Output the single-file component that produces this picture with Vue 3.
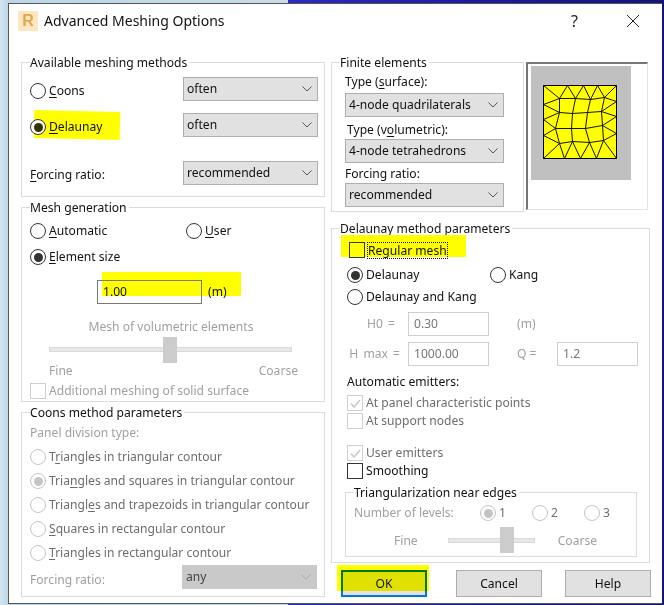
<script setup>
const coonsOptions = [
  { parts: ['T', 'r', 'iangles in triangular contour'] },
  { parts: ['Tria', 'n', 'gles and squares in triangular contour'], on: true },
  { parts: ['Triangl', 'e', 's and trapezoids in triangular contour'] },
  { parts: ['', 'S', 'quares in rectangular contour'] },
  { parts: ['', 'T', 'riangles in rectangular contour'] },
]
const levels = [
  { n: '1', on: true },
  { n: '2' },
  { n: '3' },
]
const meshLines = [
  'M0 0L16 13L24 0L32 13L40 0L47 14L54 0L61 12L73 0',
  'M16 13L32 13L47 14L61 12',
  'M16 13L16 27M32 13L29 28M47 14L44 27M61 12L58 26',
  'M16 27L29 28L44 27L58 26',
  'M16 27L12 43M29 28L28 43M44 27L42 43M58 26L59 40',
  'M12 43L28 43L42 43L59 40',
  'M12 43L16 58M28 43L29 56M42 43L46 57M59 40L60 55',
  'M16 58L29 56L46 57L60 55',
  'M0 73L16 58L21 73L29 56L37 73L46 57L53 73L60 55L73 73',
  'M0 19L16 13M0 19L16 27L0 34L12 43L0 50L16 58',
  'M73 16L61 12M73 16L58 26L73 31L59 40L73 48L60 55',
]
</script>

<template>
  <div class="screen">
    <div class="dialog">
      <header class="titlebar">
        <div class="appicon"><span>R</span></div>
        <h1 class="title">Advanced Meshing Options</h1>
        <span class="help-q">?</span>
        <svg class="close" width="14" height="14" viewBox="0 0 14 14"><path d="M1 1L13 13M13 1L1 13" stroke="#222" stroke-width="1" fill="none" /></svg>
      </header>

      <div class="columns">
        <div class="col-left">
          <section class="group g-methods">
            <div class="legend">Available meshing methods</div>
            <div class="row r-coons">
              <span class="radio"></span>
              <span class="rlabel"><u>C</u>oons</span>
              <div class="select s-left"><span>often</span><svg class="chev" width="10" height="6" viewBox="0 0 10 6"><path d="M0.5 0.5L5 5L9.500 0.5" /></svg></div>
            </div>
            <div class="row r-delaunay">
              <span class="mark m-delaunay"></span>
              <span class="radio on dark"></span>
              <span class="rlabel"><u>D</u>elaunay</span>
              <div class="select s-left"><span>often</span><svg class="chev" width="10" height="6" viewBox="0 0 10 6"><path d="M0.5 0.5L5 5L9.500 0.5" /></svg></div>
            </div>
            <div class="row r-force">
              <span class="flabel"><u>F</u>orcing ratio:</span>
              <div class="select s-left"><span>recommended</span><svg class="chev" width="10" height="6" viewBox="0 0 10 6"><path d="M0.5 0.5L5 5L9.500 0.5" /></svg></div>
            </div>
          </section>

          <section class="group g-mesh">
            <div class="legend">Mesh generation</div>
            <div class="row r-auto">
              <span class="radio"></span>
              <span class="rlabel w-auto"><u>A</u>utomatic</span>
              <span class="radio"></span>
              <span class="rlabel"><u>U</u>ser</span>
            </div>
            <div class="row r-elem">
              <span class="radio on"></span>
              <span class="rlabel"><u>E</u>lement size</span>
            </div>
            <div class="size-row">
              <span class="mark m-size"></span>
              <div class="sizebox">1.00</div>
              <span class="unit">(m)</span>
            </div>
            <div class="dis center vol-title">Mesh of volumetric elements</div>
            <div class="slider sl-vol"><i></i></div>
            <div class="dis ends"><span>Fine</span><span>Coarse</span></div>
            <label class="check-row c-add"><span class="check"></span><span class="dis">Additional meshing of solid surface</span></label>
          </section>

          <section class="group g-coons">
            <div class="legend">Coons method parameters</div>
            <div class="dis panel-type">Panel division type:</div>
            <div v-for="o in coonsOptions" :key="o.parts.join('')" class="row r-c">
              <span class="radio off" :class="{ ondis: o.on }"></span>
              <span class="rlabel gray">{{ o.parts[0] }}<u>{{ o.parts[1] }}</u>{{ o.parts[2] }}</span>
            </div>
            <div class="row r-cforce">
              <span class="dis cf-label">Forcing ratio:</span>
              <div class="select s-dis"><span>any</span><svg class="chev" width="10" height="6" viewBox="0 0 10 6"><path d="M0.5 0.5L5 5L9.500 0.5" /></svg></div>
            </div>
          </section>
        </div>

        <div class="col-right">
          <div class="top-right">
            <section class="group g-finite">
              <div class="legend">Finite elements</div>
              <div class="ft f1">Type (<u>s</u>urface):</div>
              <div class="select s-fin"><span>4-node quadrilaterals</span><svg class="chev" width="10" height="6" viewBox="0 0 10 6"><path d="M0.5 0.5L5 5L9.500 0.5" /></svg></div>
              <div class="ft f2">Type (v<u>o</u>lumetric):</div>
              <div class="select s-fin"><span>4-node tetrahedrons</span><svg class="chev" width="10" height="6" viewBox="0 0 10 6"><path d="M0.5 0.5L5 5L9.500 0.5" /></svg></div>
              <div class="ft f3">Forcing ratio:</div>
              <div class="select s-fin"><span>recommended</span><svg class="chev" width="10" height="6" viewBox="0 0 10 6"><path d="M0.5 0.5L5 5L9.500 0.5" /></svg></div>
            </section>
            <div class="preview">
              <div class="preview-bg">
                <svg class="meshsvg" width="74" height="74" viewBox="0 0 74 74">
                  <rect x="0.5" y="0.5" width="73" height="73" fill="#ffff00" stroke="#000" stroke-width="1" />
                  <path v-for="d in meshLines" :key="d" :d="d" transform="translate(0.5 0.5)" fill="none" stroke="#111" stroke-width="1" />
                </svg>
              </div>
            </div>
          </div>

          <section class="group g-del">
            <div class="legend">Delaunay method parameters</div>
            <div class="reg-row">
              <span class="mark m-reg"></span>
              <span class="check darkc"></span>
              <span class="focus">Regular mesh</span>
            </div>
            <div class="row r-d1">
              <span class="radio on"></span>
              <span class="rlabel w-del">Delaunay</span>
              <span class="radio"></span>
              <span class="rlabel">Kang</span>
            </div>
            <div class="row r-d2">
              <span class="radio"></span>
              <span class="rlabel">Delaunay and Kang</span>
            </div>
            <div class="param p1">
              <span class="dis plabel">H0 =</span>
              <div class="inp">0.30</div>
              <span class="dis pmid">(m)</span>
            </div>
            <div class="param p2">
              <span class="dis plabel">H max =</span>
              <div class="inp">1000.00</div>
              <span class="dis pmid q">Q =</span>
              <div class="inp">1.2</div>
            </div>
            <div class="auto-em">Automatic emitters:</div>
            <label class="check-row c1"><span class="check ticked"><svg width="13" height="13" viewBox="0 0 13 13"><path d="M2 6.5L5 10L11 3" /></svg></span><span class="gray">At panel characteristic points</span></label>
            <label class="check-row c2"><span class="check"></span><span class="gray">At support nodes</span></label>
            <label class="check-row c3"><span class="check ticked"><svg width="13" height="13" viewBox="0 0 13 13"><path d="M2 6.5L5 10L11 3" /></svg></span><span class="gray">User emitters</span></label>
            <label class="check-row c4"><span class="check darkc"></span><span>Smoothing</span></label>

            <section class="group g-tri">
              <div class="legend">Triangularization near edges</div>
              <div class="levels">
                <span class="dis lv-label">Number of levels:</span>
                <div v-for="l in levels" :key="l.n" class="lv">
                  <span class="radio off" :class="{ ondis: l.on }"></span>
                  <span class="gray">{{ l.n }}</span>
                </div>
              </div>
              <div class="tri-slider">
                <span class="dis">Fine</span>
                <div class="slider sl-tri"><i></i></div>
                <span class="dis">Coarse</span>
              </div>
            </section>
          </section>

          <div class="buttons">
            <button class="btn ok"><span class="mark m-ok"></span><span class="oktext">OK</span></button>
            <button class="btn cancel">Cancel</button>
            <button class="btn">Help</button>
          </div>
        </div>
      </div>
    </div>
  </div>
</template>

<style>
html, body { margin: 0; padding: 0; }
</style>

<style scoped>
.screen {
  width: 664px;
  height: 605px;
  overflow: hidden;
  box-sizing: border-box;
  padding: 3px 0 0 8px;
  background: linear-gradient(90deg, #d3e5f0 0, #bed6e7 8px, #c8dcea 288px, #2c2cc0 288px, #1c1c98 480px, #14147c 100%);
  font-family: "Noto Sans", "Open Sans", sans-serif;
  font-size: 12.1px;
  line-height: 16px;
  color: #111;
  position: relative;
}
.dialog {
  width: 654px;
  height: 601px;
  box-sizing: border-box;
  background: #fff;
  border: 1px solid #555;
  border-right: 0;
  padding: 0 0 0 12px;
}
.titlebar { display: flex; align-items: center; height: 37px; box-sizing: border-box; padding-bottom: 3px; position: relative; margin-left: -3px; }
.appicon { width: 20px; height: 20px; background: #fde6c0; display: flex; align-items: center; justify-content: center; flex: none; }
.appicon span { font: bold 16px "Liberation Sans", sans-serif; color: #e0a84e; }
.title { font-weight: 400; font-size: 14px; margin: 0 0 0 6px; flex: none; width: 527px; color: #111; }
.help-q { font-size: 16px; width: 55px; flex: none; color: #222; }
.close { flex: none; }

.columns { display: flex; gap: 6px; }
.col-left { width: 304px; display: flex; flex-direction: column; gap: 10px; padding-top: 21px; }
.col-right { width: 320px; padding-top: 21px; }

.group { border: 1px solid #dcdcdc; box-sizing: border-box; padding: 0 8px; position: relative; }
.legend { margin-top: -8px; background: #fff; width: fit-content; padding-right: 2px; height: 16px; color: #111; }

.row { display: flex; align-items: center; height: 16px; }
.radio { width: 16px; height: 16px; border: 1px solid #333; border-radius: 50%; box-sizing: border-box; flex: none; background: #fff; position: relative; margin-right: 3px; }
.radio.on::after { content: ""; position: absolute; inset: 2.5px; border-radius: 50%; background: #333; }
.radio.on.dark::after { background: #333300; }
.radio.off { border-color: #c4c4c4; }
.radio.ondis::after { content: ""; position: absolute; inset: 2.5px; border-radius: 50%; background: #c4c4c4; }
u { text-decoration: underline; text-underline-offset: 2px; text-decoration-thickness: 1px; }
.gray { color: #6d6d6d; }
.dis { color: #a0a0a0; }

.select { height: 24px; box-sizing: border-box; border: 1px solid #adadad; background: #e1e1e1; display: flex; align-items: center; justify-content: space-between; padding: 0 5px 0 3px; flex: none; }
.chev { fill: none; stroke: #555; stroke-width: 1; }
.s-left { width: 135px; margin-left: auto; margin-right: -2px; }
.s-fin { width: 159px; margin-left: 5px; }
.s-dis { width: 135px; margin-left: auto; margin-right: -1px; background: #c9c9c9; border-color: #c9c9c9; color: #444; }
.s-dis .chev { stroke: #aaa; }

.g-methods { height: 135px; }
.r-coons { height: 24px; margin-top: 6px; }
.r-delaunay { height: 24px; margin-top: 12px; position: relative; }
.r-coons .radio, .r-coons .rlabel, .r-delaunay .radio, .r-delaunay .rlabel { margin-top: 4px; }
.r-force { height: 24px; margin-top: 24px; }
.flabel { margin-top: 4px; }
.mark { position: absolute; background: #ffff00; }
.m-delaunay { left: 4px; top: -2px; width: 86px; height: 28px; transform: rotate(1.2deg); }
.r-delaunay .radio, .r-delaunay .rlabel { position: relative; }

.g-mesh { height: 195px; }
.r-auto { margin-top: 6px; height: 18px; }
.w-auto { width: 137px; }
.r-elem { margin-top: 8px; height: 18px; }
.size-row { display: flex; align-items: center; margin: 14px 0 0 67px; position: relative; height: 24px; }
.m-size { left: 5px; top: -8px; width: 139px; height: 24px; }
.sizebox { position: relative; width: 105px; height: 24px; box-sizing: border-box; border: 1px solid #7a7a7a; padding: 3px 5px; }
.unit { position: relative; margin-left: 6px; }
.vol-title { text-align: center; margin-top: 15px; padding-right: 4px; }
.slider { height: 5px; background: #e7e7e7; border: 1px solid #dadada; box-sizing: border-box; position: relative; }
.slider i { position: absolute; width: 14px; height: 26px; background: #cccccc; top: -11px; }
.sl-vol { margin: 12px 24px 0 19px; }
.sl-vol i { left: 113px; }
.ends { display: flex; justify-content: space-between; margin: 11px 18px 0 19px; }
.check-row { display: flex; align-items: center; gap: 3px; height: 16px; }
.check { width: 16px; height: 16px; flex: none; border: 1px solid #cfcfcf; box-sizing: border-box; display: flex; align-items: center; justify-content: center; background: #fff; }
.check svg { fill: none; stroke: #c8c8c8; stroke-width: 1.5; }
.darkc { border-color: #333; }
.c-add { margin-top: 4px; }

.g-coons { height: 185px; }
.panel-type { margin-top: 4px; }
.r-c { margin-top: 8px; }
.r-cforce { margin-top: 4px; height: 24px; }
.cf-label { margin-top: 6px; }

.top-right { display: flex; gap: 2px; align-items: flex-start; }
.g-finite { width: 193px; height: 150px; padding: 0 8px; }
.g-finite .select { margin-left: 5px; }
.ft { margin-left: 5px; height: 16px; }
.f1 { margin-top: 3px; margin-bottom: 3px; }
.f2 { margin: 5px 0 1px 7px; }
.f3 { margin-top: 3px; margin-bottom: 1px; }
.preview { width: 122px; height: 148px; box-sizing: border-box; border: 1px solid #e4e4e4; border-top: 2px solid #777; border-left: 2px solid #777; padding: 2px 0 0 3px; }
.preview-bg { width: 100px; height: 114px; background: #c0c0c0; padding: 19px 0 0 12px; box-sizing: border-box; }
.meshsvg { display: block; }

.g-del { width: 319px; height: 335px; margin-top: 16px; padding: 0 8px; }
.reg-row { display: flex; align-items: center; gap: 2px; margin: 4px 0 0 9px; position: relative; height: 18px; }
.m-reg { left: -8px; top: -6px; width: 125px; height: 22px; }
.reg-row .check { position: relative; background: transparent; }
.focus { position: relative; outline: 1px dotted #111; outline-offset: -1px; padding: 0 1px; height: 17px; line-height: 17px; }
.r-d1 { margin-top: 7px; height: 18px; }
.r-d1 .radio, .r-d2 .radio { margin-left: 7px; }
.w-del { width: 117px; }
.r-d2 { margin-top: 4px; height: 18px; }
.param { display: flex; align-items: center; height: 24px; }
.p1 { margin-top: 6px; }
.p2 { margin-top: 6px; }
.plabel { width: 65px; text-align: right; padding-right: 8px; box-sizing: border-box; margin-left: 3px; flex: none; white-space: nowrap; word-spacing: 2px; }
.p1 .plabel { padding-right: 13px; }
.inp { width: 81px; height: 24px; box-sizing: border-box; border: 1px solid #cfcfcf; color: #777; padding: 3px 5px; flex: none; }
.pmid { margin-left: 28px; width: 40px; flex: none; }
.auto-em { margin: 8px 0 0 7px; }
.check-row.c1, .check-row.c2, .check-row.c3, .check-row.c4 { margin-left: 7px; }
.c1 { margin-top: 5px; }
.c2 { margin-top: 2px; }
.c3 { margin-top: 16px; }
.c4 { margin-top: 2px; }
.g-tri { width: 292px; height: 65px; margin: 13px 0 0 5px; padding: 0 8px; }
.levels { display: flex; align-items: center; height: 18px; margin-top: 3px; }
.lv-label { width: 126px; flex: none; }
.lv { display: flex; align-items: center; width: 52px; flex: none; }
.lv .radio { margin-right: 3px; }
.tri-slider { display: flex; align-items: center; margin-top: 11px; margin-left: 40px; height: 16px; }
.sl-tri { width: 87px; margin: -2px 23px 0 30px; flex: none; }
.sl-tri i { left: 51px; top: -12px; }

.buttons { display: flex; margin-top: 7px; height: 27px; margin-left: 10px; }
.btn { font: inherit; color: #111; width: 86px; height: 27px; box-sizing: border-box; border: 1px solid #adadad; background: #e1e1e1; padding: 0; position: relative; }
.ok { border: 2px solid #0078d7; }
.cancel { margin-left: 29px; margin-right: 23px; }
.m-ok { left: -6px; top: -7px; width: 92px; height: 26px; background: #ffff00; mix-blend-mode: multiply; }
.oktext { position: relative; }
</style>
